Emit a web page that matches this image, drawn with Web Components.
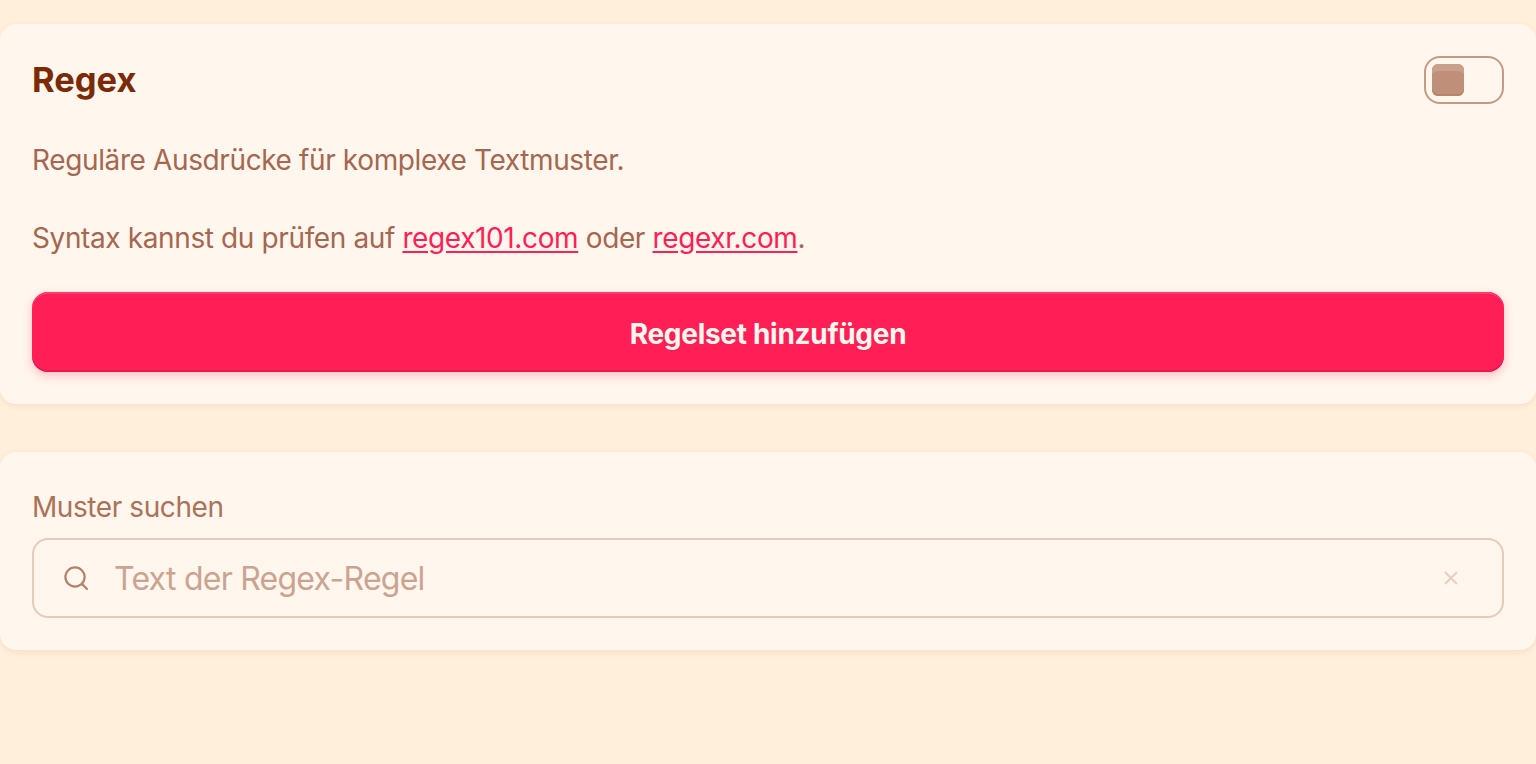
<!DOCTYPE html>
<html lang="de">
<head>
<meta charset="utf-8">
<title>Regex</title>
<style>
  html, body { margin: 0; height: 100%; }
  body {
    background: #ffefdb;
    font-family: Inter, "Liberation Sans", sans-serif;
    overflow: hidden;
  }
</style>
</head>
<body>
<app-page>
  <app-card>
    <card-header title="Regex"><app-toggle></app-toggle></card-header>
    <rule-info></rule-info>
    <app-button>Regelset hinzufügen</app-button>
  </app-card>
  <app-card>
    <search-field label="Muster suchen" placeholder="Text der Regex-Regel"></search-field>
  </app-card>
</app-page>

<script>
class AppPage extends HTMLElement {
  constructor() {
    super()
    this.attachShadow({ mode: 'open' }).innerHTML = `
      <style>
      :host { display: flex; flex-direction: column; gap: 48px; padding-top: 24px; }
      </style>
      <slot></slot>`
  }
}

class AppCard extends HTMLElement {
  constructor() {
    super()
    this.attachShadow({ mode: 'open' }).innerHTML = `
      <style>
      :host {
        display: block;
        padding: 32px;
        background: #fff6ed;
        border-radius: 16px;
        box-shadow: 0 2px 6px rgba(180, 110, 50, .12);
      }
      </style>
      <slot></slot>`
  }
}

class CardHeader extends HTMLElement {
  constructor() {
    super()
    this.attachShadow({ mode: 'open' }).innerHTML = `
      <style>
      :host { display: flex; align-items: center; justify-content: space-between; height: 48px; }
      h2 { margin: 0; font-size: 34.5px; line-height: 48px; font-weight: 700; letter-spacing: 0; color: #7b2a06; }
      </style>
      <h2>${this.getAttribute('title')}</h2>
      <slot></slot>`
  }
}

class AppToggle extends HTMLElement {
  constructor() {
    super()
    this.attachShadow({ mode: 'open' }).innerHTML = `
      <style>
      :host {
        display: block;
        box-sizing: border-box;
        width: 80px;
        height: 48px;
        padding: 6px;
        border: 2px solid #c49a85;
        border-radius: 16px;
      }
      i {
        display: block;
        width: 32px;
        height: 32px;
        border-radius: 6px;
        background: #bf8f79;
        box-shadow: inset 0 8px 0 -1px #c9a08c, inset 0 -2px 0 #b48670;
      }
      </style>
      <i></i>`
  }
}

class RuleInfo extends HTMLElement {
  constructor() {
    super()
    this.attachShadow({ mode: 'open' }).innerHTML = `
      <style>
      :host { display: block; margin-top: 37px; font-size: 28px; letter-spacing: -.38px; line-height: 39px; color: #a5674f; }
      p { margin: 0 0 39px; }
      p:last-child { margin: 0; }
      a { color: #ff1f56; text-decoration: underline; text-underline-offset: 3px; }
      </style>
      <p>Reguläre Ausdrücke für komplexe Textmuster.</p>
      <p>Syntax kannst du prüfen auf <a href="#">regex101.com</a> oder <a href="#">regexr.com</a>.</p>`
  }
}

class AppButton extends HTMLElement {
  constructor() {
    super()
    this.attachShadow({ mode: 'open' }).innerHTML = `
      <style>
      :host { display: block; margin-top: 34px; }
      button {
        display: block;
        box-sizing: border-box;
        width: 100%;
        height: 80px;
        padding: 4px 0 0;
        border: 0;
        border-radius: 16px;
        background: #ff1f56;
        color: #fff6ed;
        font: 700 28px Inter, "Liberation Sans", sans-serif;
        letter-spacing: -.3px;
        box-shadow: inset 0 2px 0 #ff3d6d, inset 0 -2px 0 #e81a4d, 0 4px 10px rgba(255, 31, 86, .25);
      }
      </style>
      <button><slot></slot></button>`
  }
}

class SearchField extends HTMLElement {
  constructor() {
    super()
    this.attachShadow({ mode: 'open' }).innerHTML = `
      <style>
      :host { display: block; }
      label { display: block; padding-top: 2px; font-size: 28px; letter-spacing: -.42px; line-height: 42px; margin-bottom: 10px; color: #ab7259; }
      .box {
        display: flex;
        align-items: center;
        box-sizing: border-box;
        height: 80px;
        padding: 0 44px 0 28px;
        border: 2px solid #e6cbbb;
        border-radius: 16px;
      }
      svg { flex: none; display: block; }
      input {
        flex: 1;
        min-width: 0;
        margin-left: 24px;
        padding: 0;
        border: 0;
        outline: 0;
        background: none;
        font: 400 32px Inter, "Liberation Sans", sans-serif;
        letter-spacing: -.75px;
      }
      input::placeholder { color: #cba491; opacity: 1; }
      </style>
      <label>${this.getAttribute('label')}</label>
      <div class="box">
        <svg width="28" height="28" viewBox="0 0 28 28" fill="none" stroke="#b5806a" stroke-width="2.2" stroke-linecap="round">
          <circle cx="13" cy="13" r="9.6"/><path d="M20.4 20.4 25 25"/>
        </svg>
        <input placeholder="${this.getAttribute('placeholder')}">
        <svg width="14" height="14" viewBox="0 0 14 14" fill="none" stroke="#eacfc1" stroke-width="2">
          <path d="M1 1l12 12M13 1 1 13"/>
        </svg>
      </div>`
  }
}

customElements.define('app-page', AppPage)
customElements.define('app-card', AppCard)
customElements.define('card-header', CardHeader)
customElements.define('app-toggle', AppToggle)
customElements.define('rule-info', RuleInfo)
customElements.define('app-button', AppButton)
customElements.define('search-field', SearchField)
</script>
</body>
</html>
